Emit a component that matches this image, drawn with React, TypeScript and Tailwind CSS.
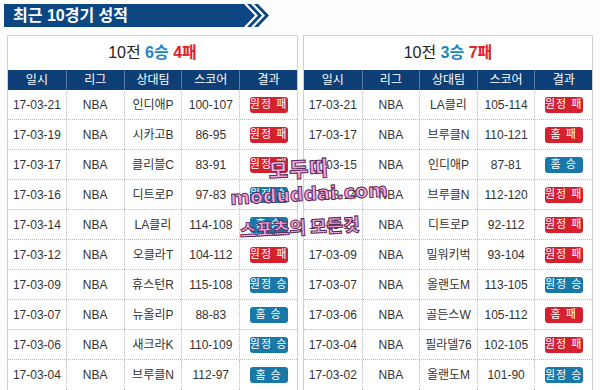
import React from "react";

type Game = { date: string; team: string; score: string; result: string; win: boolean };

const left: Game[] = [
  { date: "17-03-21", team: "인디애P", score: "100-107", result: "원정 패", win: false },
  { date: "17-03-19", team: "시카고B", score: "86-95", result: "원정 패", win: false },
  { date: "17-03-17", team: "클리블C", score: "83-91", result: "원정 패", win: false },
  { date: "17-03-16", team: "디트로P", score: "97-83", result: "원정 승", win: true },
  { date: "17-03-14", team: "LA클리", score: "114-108", result: "홈 승", win: true },
  { date: "17-03-12", team: "오클라T", score: "104-112", result: "원정 패", win: false },
  { date: "17-03-09", team: "휴스턴R", score: "115-108", result: "원정 승", win: true },
  { date: "17-03-07", team: "뉴올리P", score: "88-83", result: "홈 승", win: true },
  { date: "17-03-06", team: "새크라K", score: "110-109", result: "원정 승", win: true },
  { date: "17-03-04", team: "브루클N", score: "112-97", result: "홈 승", win: true },
];

const right: Game[] = [
  { date: "17-03-21", team: "LA클리", score: "105-114", result: "원정 패", win: false },
  { date: "17-03-17", team: "브루클N", score: "110-121", result: "홈 패", win: false },
  { date: "17-03-15", team: "인디애P", score: "87-81", result: "홈 승", win: true },
  { date: "17-03-14", team: "브루클N", score: "112-120", result: "원정 패", win: false },
  { date: "17-03-12", team: "디트로P", score: "92-112", result: "원정 패", win: false },
  { date: "17-03-09", team: "밀워키벅", score: "93-104", result: "원정 패", win: false },
  { date: "17-03-07", team: "올랜도M", score: "113-105", result: "원정 승", win: true },
  { date: "17-03-06", team: "골든스W", score: "105-112", result: "홈 패", win: false },
  { date: "17-03-04", team: "필라델76", score: "102-105", result: "원정 패", win: false },
  { date: "17-03-02", team: "올랜도M", score: "101-90", result: "원정 승", win: true },
];

const heads = ["일시", "리그", "상대팀", "스코어", "결과"];

function Badge({ text, win }: { text: string; win: boolean }) {
  return (
    <span
      className={
        "inline-flex h-[16px] w-[38px] items-center justify-center rounded-[3px] text-[11px] leading-none tracking-[1px] text-white " +
        (win ? "bg-[#1878a8]" : "bg-[#d5202e]")
      }
    >
      {text}
    </span>
  );
}

function Panel({ games, wins, losses, width }: { games: Game[]; wins: number; losses: number; width: string }) {
  return (
    <div className={"border border-[#cfcfcf] bg-white " + width}>
      {/* summary */}
      <div className="flex h-[34px] items-center justify-center text-[16px] text-[#222]">
        10전&nbsp;<span className="font-bold text-[#1b86c0]">{wins}승</span>&nbsp;
        <span className="font-bold text-[#e0202a]">{losses}패</span>
      </div>
      {/* header */}
      <div className="grid h-[20px] grid-cols-5 bg-[#0d3f76] text-[12px] text-white">
        {heads.map((h, i) => (
          <div key={h} className={"flex items-center justify-center " + (i > 0 ? "border-l border-[#5a7aa0]" : "")}>
            {h}
          </div>
        ))}
      </div>
      {/* rows */}
      {games.map((g, i) => (
        <div key={i} className="grid h-[30px] grid-cols-5 border-b border-dotted border-[#bdbdbd] text-[12px] text-[#333] last:border-b-0">
          <div className="flex items-center justify-center">{g.date}</div>
          <div className="flex items-center justify-center border-l border-dotted border-[#bdbdbd]">NBA</div>
          <div className="flex items-center justify-center border-l border-dotted border-[#bdbdbd]">{g.team}</div>
          <div className="flex items-center justify-center border-l border-dotted border-[#bdbdbd]">{g.score}</div>
          <div className="flex items-center justify-center border-l border-dotted border-[#bdbdbd]">
            <Badge text={g.result} win={g.win} />
          </div>
        </div>
      ))}
    </div>
  );
}

export default function App() {
  return (
    <div
      className="relative h-[390px] w-[600px] overflow-hidden bg-[#fdfdfb]"
      style={{ fontFamily: '"Liberation Sans", "Noto Sans CJK KR", sans-serif' }}
    >
      {/* title banner */}
      <div className="ml-[4px] mt-[4px] flex h-[23px] items-center">
        <div className="flex h-full w-[237px] items-center bg-[#0c4784] pl-[9px] text-[16px] font-bold text-white">
          최근 10경기 성적
        </div>
        <svg width="30" height="23" viewBox="0 0 30 23">
          <polygon points="0,0 3,0 14,11.5 3,23 0,23" fill="#0c4784" />
          <polygon points="6,0 10,0 21,11.5 10,23 6,23 17,11.5" fill="#0c4784" />
          <polygon points="13,0 17,0 28,11.5 17,23 13,23 24,11.5" fill="#0c4784" />
        </svg>
      </div>

      <div className="mt-[8px] flex gap-[5px] pl-[7px]">
        <Panel games={left} wins={6} losses={4} width="w-[291px]" />
        <Panel games={right} wins={3} losses={7} width="w-[290px]" />
      </div>

      {/* watermark */}
      <div
        className="pointer-events-none absolute left-0 top-0 h-full w-full -rotate-3 font-black text-[#f7a6d8]"
        style={{ WebkitTextStroke: "1px #5a2a60", fontFamily: '"Noto Sans CJK KR", sans-serif' }}
      >
        <span className="absolute left-[270px] top-[156px] text-[21px] leading-[24px] tracking-[1px]">모두따</span>
        <span
          className="absolute left-[230px] top-[181px] text-[19px] leading-[26px] tracking-[0px]"
          style={{ fontFamily: '"DejaVu Sans", sans-serif' }}
        >
          moduddai.com
        </span>
        <span className="absolute left-[238px] top-[213px] text-[18px] leading-[26px] tracking-[0px]">스포츠의 모든것</span>
      </div>
    </div>
  );
}
